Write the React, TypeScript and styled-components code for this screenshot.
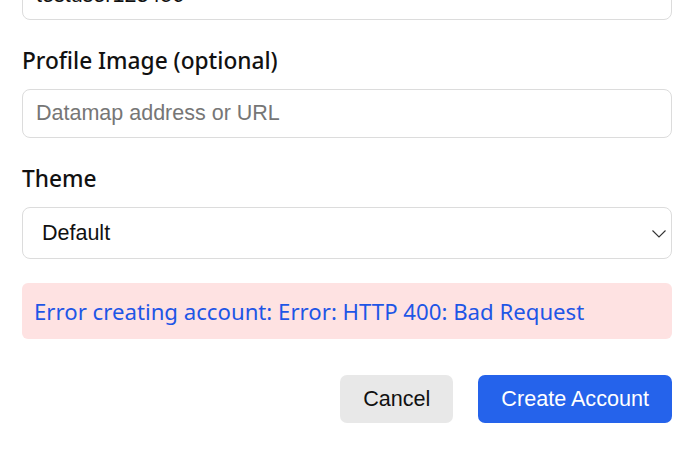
import styled, { createGlobalStyle } from 'styled-components'

const GlobalStyle = createGlobalStyle`
  html, body {
    margin: 0;
    padding: 0;
    background: #ffffff;
    overflow: hidden;
  }
`

const Page = styled.div`
  width: 690px;
  height: 456px;
  overflow: hidden;
  background: #ffffff;
`

const Form = styled.form`
  display: flex;
  flex-direction: column;
  padding: 0 18px 0 22px;
  margin-top: -29px;
`

const Field = styled.div`
  display: flex;
  flex-direction: column;
  gap: 11px;
  margin-bottom: 24px;
`

const Label = styled.label`
  font-family: "Noto Sans", "Open Sans", sans-serif;
  font-size: 22.7px;
  font-weight: 500;
  line-height: 34px;
  color: #111111;
`

const TextInput = styled.input`
  box-sizing: border-box;
  width: 100%;
  height: 49px;
  padding: 0 13px;
  border: 1.5px solid #dcdcdc;
  border-radius: 8px;
  font-family: "Liberation Sans", Arial, sans-serif;
  font-size: 21.5px;
  color: #111111;
  background: #ffffff;
  outline: none;

  &::placeholder {
    color: #767676;
  }
`

const SelectWrap = styled.div`
  position: relative;
`

const Select = styled.select`
  box-sizing: border-box;
  width: 100%;
  height: 52px;
  padding: 0 19px;
  border: 1.5px solid #dcdcdc;
  border-radius: 8px;
  font-family: "Liberation Sans", Arial, sans-serif;
  font-size: 21.5px;
  color: #111111;
  background: #ffffff;
  appearance: none;
  outline: none;
`

const Chevron = styled.svg`
  position: absolute;
  right: 6px;
  top: 23px;
  pointer-events: none;
`

const ErrorBox = styled.div`
  box-sizing: border-box;
  height: 56px;
  display: flex;
  align-items: center;
  padding: 0 12px;
  border-radius: 6px;
  background: #fee2e2;
  color: #1e56e6;
  font-family: "Noto Sans", "Open Sans", sans-serif;
  font-size: 22.2px;
`

const Actions = styled.div`
  display: flex;
  justify-content: flex-end;
  gap: 25px;
  margin-top: 36px;
`

const Button = styled.button<{ $primary?: boolean }>`
  box-sizing: border-box;
  height: 48px;
  padding: 0 23px;
  border: none;
  border-radius: 7px;
  font-family: "Liberation Sans", Arial, sans-serif;
  font-size: 21.6px;
  color: ${(p) => (p.$primary ? '#ffffff' : '#111111')};
  background: ${(p) => (p.$primary ? '#2563eb' : '#e8e8e8')};
  cursor: pointer;
`

export default function App() {
  return (
    <Page>
      <GlobalStyle />
      <Form onSubmit={(e) => e.preventDefault()}>
        <Field>
          <TextInput defaultValue="testuser123456" />
        </Field>
        <Field>
          <Label>Profile Image (optional)</Label>
          <TextInput placeholder="Datamap address or URL" />
        </Field>
        <Field>
          <Label>Theme</Label>
          <SelectWrap>
            <Select defaultValue="default">
              <option value="default">Default</option>
            </Select>
            <Chevron width="14" height="8" viewBox="0 0 14 8">
              <path d="M0.5 0.5 L7 7 L13.5 0.5" fill="none" stroke="#333" strokeWidth="1.1" />
            </Chevron>
          </SelectWrap>
        </Field>
        <ErrorBox>Error creating account: Error: HTTP 400: Bad Request</ErrorBox>
        <Actions>
          <Button type="button">Cancel</Button>
          <Button type="submit" $primary>
            Create Account
          </Button>
        </Actions>
      </Form>
    </Page>
  )
}
